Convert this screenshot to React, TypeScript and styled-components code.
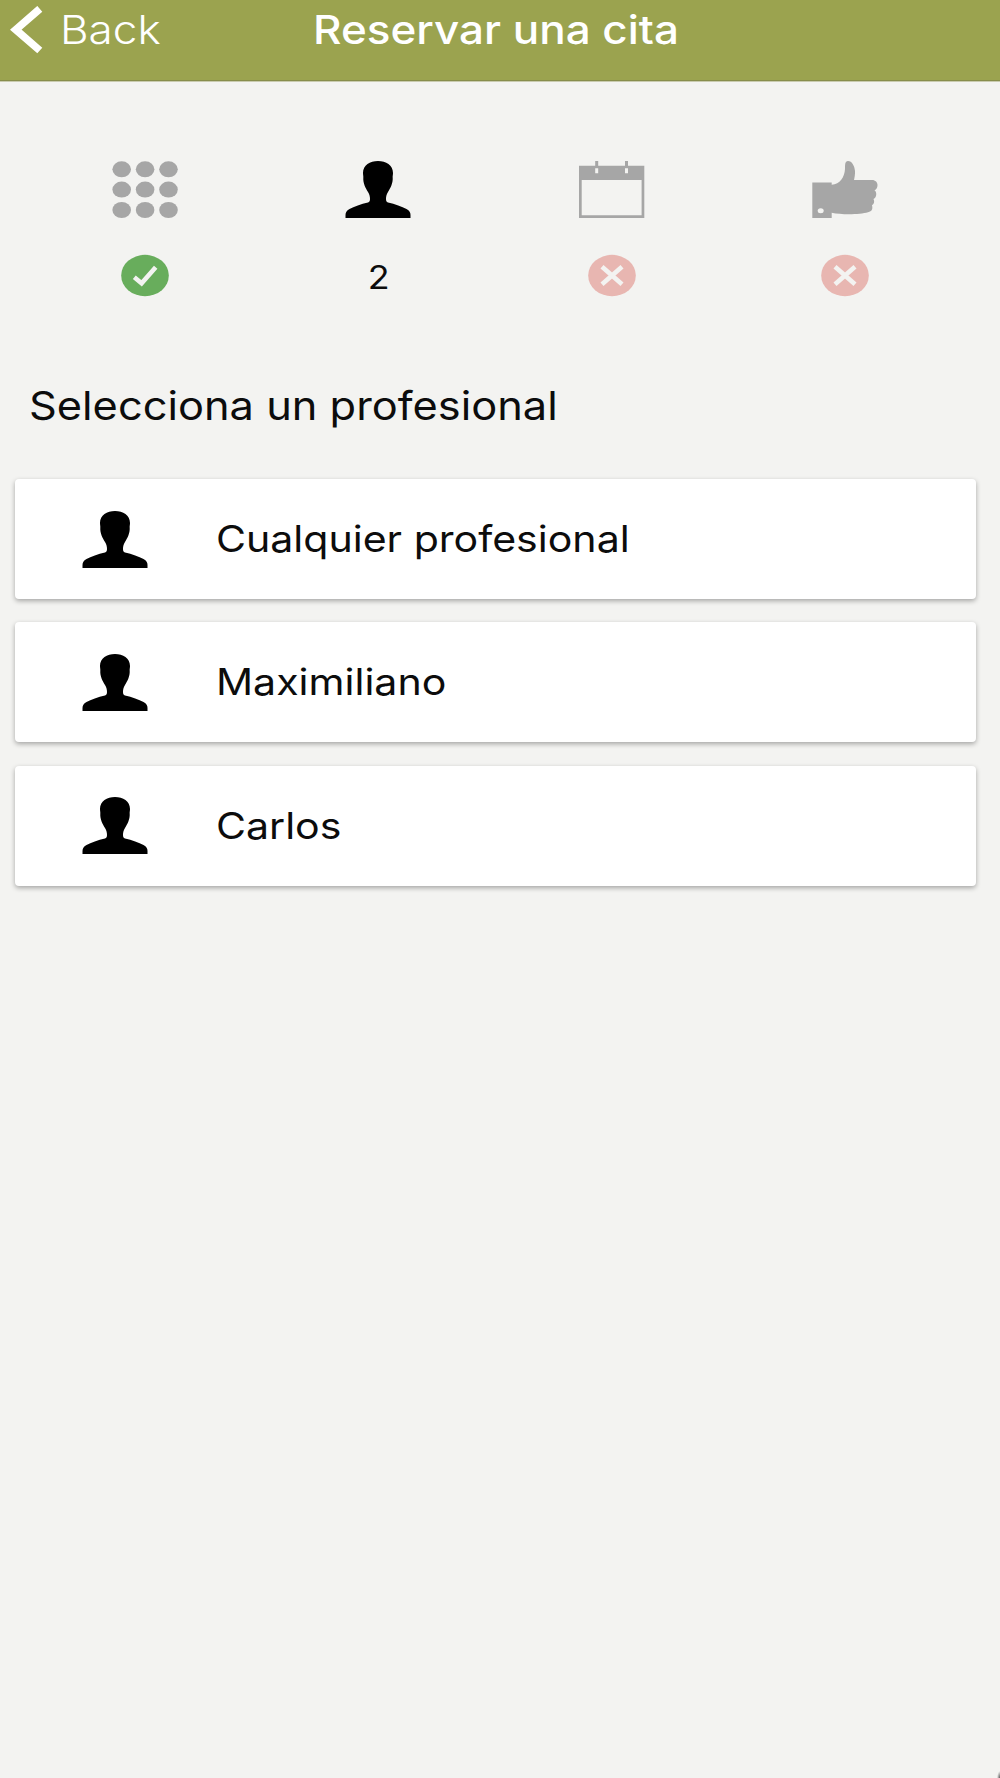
import React from "react";
import styled, { createGlobalStyle } from "styled-components";

const Global = createGlobalStyle`
  * { box-sizing: border-box; }
  body { margin: 0; background: #f3f3f1; }
`;

const Screen = styled.main`
  width: 1000px;
  height: 1778px;
  overflow: hidden;
  color: #0c0c0c;
  font-family: Inter, "Liberation Sans", sans-serif;
  background: radial-gradient(ellipse 3px 7px at 100% 100%, #555 0%, #f3f3f1 100%) #f3f3f1;
`;

const WideText = styled.span<{ $stretch: number; $origin?: string }>`
  display: block;
  white-space: nowrap;
  transform: scaleX(${(p) => p.$stretch});
  transform-origin: ${(p) => p.$origin ?? "left"} center;
`;

const Header = styled.header`
  display: grid;
  grid-template-columns: 313px 1fr;
  align-items: start;
  height: 81px;
  color: #fff;
  background: #9ba34f;
  border-bottom: 1px solid #878d4c;
  box-shadow: 0 1px 0 #c9cbb0;
`;

const BackButton = styled.button`
  display: flex;
  align-items: flex-start;
  gap: 17px;
  height: 60px;
  padding: 0 0 0 10px;
  border: 0;
  background: none;
  color: inherit;
  font: 360 39px/60px Inter, sans-serif;

  svg { margin-top: 6px; flex: none; }
`;

const Title = styled.h1`
  margin: 0;
  font-size: 39px;
  line-height: 60px;
  font-weight: 490;
`;

const Steps = styled.nav`
  display: grid;
  grid-template-columns: repeat(4, 1fr);
  margin: 80px 38.5px 0 28.7px;
`;

const Step = styled.div`
  display: flex;
  flex-direction: column;
  align-items: center;
  gap: 36px;
  color: #a6a6a6;

  svg { display: block; }
`;

const StepNumber = styled.div`
  height: 43px;
  color: #0c0c0c;
  font-size: 32px;
  line-height: 47px;
`;

const Heading = styled.h2`
  margin: 79px 0 0 29px;
  height: 60px;
  font-size: 39.5px;
  line-height: 61px;
  font-weight: 400;
`;

const List = styled.div`
  display: flex;
  flex-direction: column;
  gap: 23.4px;
  padding: 43px 24px 0 15px;
`;

const Card = styled.div`
  display: flex;
  align-items: center;
  gap: 67.5px;
  height: 120px;
  padding-left: 67px;
  border-radius: 4px;
  background: #fff;
  box-shadow: 0 2px 5px rgba(0, 0, 0, 0.32);
  font-size: 37px;
  line-height: 50px;

  svg { flex: none; }
`;

const ChevronLeft = () => (
  <svg width="33" height="48" viewBox="0 0 33 48" fill="none" stroke="currentColor" strokeWidth="7.6">
    <path d="M29.8 2.8 5.8 23.7 29.8 44.5" />
  </svg>
);

const Person = () => (
  <svg width="66" height="57" viewBox="0 0 66 57" fill="#000">
    <path d="M33 0C41 0 48 4 48 12C48 14 47.5 15 47.7 17C48 22 45.5 27 43 31C41.5 33.5 41 35.5 41 38C41 40 41.5 41 43 41.5C50 43 57 45.5 61.5 48C64.5 49.7 65.5 51.5 65.500 54V57H.5V54C.5 51.500 1.500 49.700 4.500 48C9 45.500 16 43 23 41.500C24.500 41 25 40 25 38C25 35.500 24.500 33.500 23 31C20.500 27 18 22 18.300 17C18.500 15 18 14 18 12C18 4 25 0 33 0Z" />
  </svg>
);

const GridDots = () => (
  <svg width="66" height="57" viewBox="0 0 66 57" fill="currentColor">
    {[8.3, 28.6, 49].map((cy) =>
      [9.7, 33.1, 56.5].map((cx) => <ellipse key={`${cx}-${cy}`} cx={cx} cy={cy} rx="9.3" ry="8" />)
    )}
  </svg>
);

const Calendar = () => (
  <svg width="66" height="57" viewBox="0 0 66 57">
    <path fill="currentColor" fillRule="evenodd" d="M0 4.800H65.300V57H0ZM2.700 19v35.300h59.900V19Z" />
    <path fill="currentColor" d="M16.200 0h3v7.500h-3zM46 0h3v7.500h-3z" />
    <path fill="#f3f3f1" d="M16.200 7.300h3v5h-3zM46 7.300h3v5h-3z" />
  </svg>
);

const ThumbUp = () => (
  <svg width="66" height="57" viewBox="0 0 66 57">
    <path fill="currentColor" d="M.3 21.500h19.400v2.300C28 23.500 32.500 16 33 8c.1-4-.2-8 3-8 4 0 6.600 5 7 10 .2 3-.4 6.500-1 9h18c3.500 0 5.500 2.500 5.500 5s-1 4.500-3 5.300c2.500 1.700 2.500 7.200-1 8.700 1.200 2 .8 5-1.500 6.300 1 3.700 0 6.200-4 7C48 53.700 30 54 19.700 51.800V57H.3Z" />
    <ellipse cx="8.700" cy="49.800" rx="3" ry="2.500" fill="#f3f3f1" />
  </svg>
);

const DoneBadge = () => (
  <svg width="48" height="43" viewBox="0 0 48 43" fill="none">
    <ellipse cx="24" cy="21.500" rx="23.800" ry="20.700" fill="#68ad5c" />
    <path d="M13.300 23.300 20.600 29.300 34.700 13.200" stroke="#f3f3f1" strokeWidth="4.600" />
  </svg>
);

const PendingBadge = () => (
  <svg width="48" height="43" viewBox="0 0 48 43" fill="none">
    <ellipse cx="24" cy="21.500" rx="23.800" ry="20.700" fill="#e8b6b1" />
    <path d="M14 12.800 34 30.200M34 12.800 14 30.200" stroke="#f3f3f1" strokeWidth="4.600" />
  </svg>
);

const professionals = ["Cualquier profesional", "Maximiliano", "Carlos"];

export default function App() {
  return (
    <Screen>
      <Global />
      <Header>
        <BackButton>
          <ChevronLeft />
          <WideText $stretch={1.13}>Back</WideText>
        </BackButton>
        <Title>
          <WideText $stretch={1.128}>Reservar una cita</WideText>
        </Title>
      </Header>
      <Steps>
        <Step><GridDots /><DoneBadge /></Step>
        <Step>
          <Person />
          <StepNumber><WideText $stretch={1.12} $origin="center">2</WideText></StepNumber>
        </Step>
        <Step><Calendar /><PendingBadge /></Step>
        <Step><ThumbUp /><PendingBadge /></Step>
      </Steps>
      <Heading>
        <WideText $stretch={1.098}>Selecciona un profesional</WideText>
      </Heading>
      <List>
        {professionals.map((name) => (
          <Card key={name}>
            <Person />
            <WideText $stretch={1.11}>{name}</WideText>
          </Card>
        ))}
      </List>
    </Screen>
  );
}
